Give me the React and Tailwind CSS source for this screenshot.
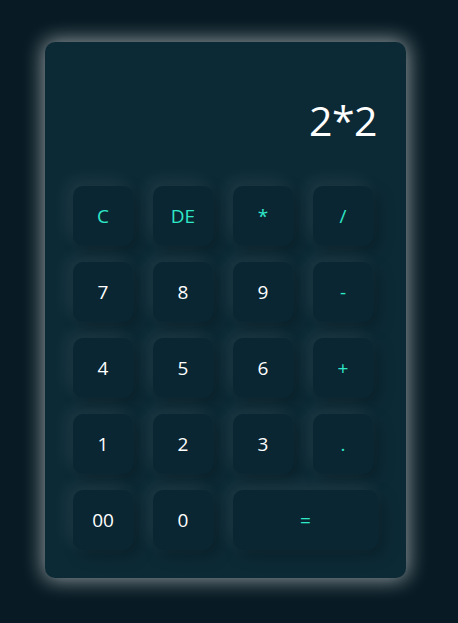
import React from "react";

const keys = [
  ["C", "op"], ["DE", "op"], ["*", "op"], ["/", "op"],
  ["7", "n"], ["8", "n"], ["9", "n"], ["-", "op"],
  ["4", "n"], ["5", "n"], ["6", "n"], ["+", "op"],
  ["1", "n"], ["2", "n"], ["3", "n"], [".", "op"],
  ["00", "n"], ["0", "n"], ["=", "eq"],
];

export default function App() {
  return (
    <div
      className="w-[458px] h-[623px] bg-[#081b24] pt-[42px] pl-[45px]"
      style={{ fontFamily: '"Open Sans", "Noto Sans", sans-serif' }}
    >
      <div className="w-[361px] h-[536px] rounded-[10px] bg-[#0c2a36] shadow-[0_0_20px_2px_rgba(255,255,255,0.55)] flex flex-col px-[28px] pb-[28px]">
        <div className="h-[144px] flex items-end justify-end pb-[45px] pr-[1px]">
          <span className="text-[41px] leading-none text-white tracking-[-0.5px]">2*2</span>
        </div>
        <div className="grid grid-cols-[60px_60px_60px_60px] gap-x-[20px] gap-y-[16px]">
          {keys.map(([k, t]) => (
            <button
              key={k}
              className={
                "h-[60px] rounded-[10px] bg-[#0a2632] text-[19px] flex items-center justify-center shadow-[-6px_-6px_18px_rgba(255,255,255,0.08),6px_6px_16px_rgba(0,0,0,0.25)] " +
                (t === "n" ? "text-white " : "text-[#2ee8c8] ") +
                (t === "eq" ? "col-span-2 w-[145px]" : "w-[60px]")
              }
            >
              {k}
            </button>
          ))}
        </div>
      </div>
    </div>
  );
}
